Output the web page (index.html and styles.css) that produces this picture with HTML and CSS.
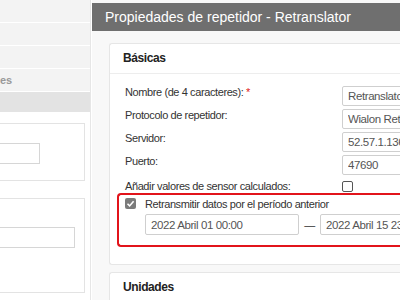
FILE: index.html
```html
<!DOCTYPE html>
<html lang="es">
<head>
    <meta charset="UTF-8">
    <title>Propiedades de repetidor</title>
    <link rel="stylesheet" href="styles.css">
</head>
<body>
<div class="page">
    <div class="side">
        <ul class="side-menu">
            <li></li>
            <li></li>
            <li></li>
            <li>es</li>
            <li class="active"></li>
        </ul>
        <div class="side-box first">
            <input type="text" class="side-input short" value="">
        </div>
        <div class="side-box second">
            <input type="text" class="side-input long" value="">
        </div>
    </div>
    <div class="main">
        <div class="title">Propiedades de repetidor - Retranslator</div>
        <div class="content">
            <div class="card">
                <div class="card-head">Básicas</div>
                <div class="card-body">
                    <div class="row">
                        <span class="label">Nombre (de 4 caracteres): <b class="req">*</b></span>
                        <input type="text" class="field" value="Retranslator">
                    </div>
                    <div class="row">
                        <span class="label">Protocolo de repetidor:</span>
                        <input type="text" class="field" value="Wialon Retranslator">
                    </div>
                    <div class="row">
                        <span class="label">Servidor:</span>
                        <input type="text" class="field" value="52.57.1.136">
                    </div>
                    <div class="row">
                        <span class="label">Puerto:</span>
                        <input type="text" class="field" value="47690">
                    </div>
                    <div class="row row-check">
                        <span class="label">Añadir valores de sensor calculados:</span>
                        <span class="check"></span>
                    </div>
                    <div class="highlight">
                        <div class="check-line">
                            <span class="check checked">
                                <svg width="11" height="11" viewBox="0 0 11 11"><path d="M2.5 5.8 L4.6 7.9 L8.6 3.2" fill="none" stroke="#fff" stroke-width="1.6"/></svg>
                            </span>
                            <span>Retransmitir datos por el período anterior</span>
                        </div>
                        <div class="dates">
                            <input type="text" class="date" value="2022 Abril 01 00:00">
                            <span class="dash">—</span>
                            <input type="text" class="date" value="2022 Abril 15 23:59">
                        </div>
                    </div>
                </div>
            </div>
            <div class="card">
                <div class="card-head">Unidades</div>
            </div>
        </div>
    </div>
</div>
</body>
</html>
```

FILE: styles.css
```css
html, body{
    overflow: hidden;
}
body{
    margin: 0;
    font: 11px "Liberation Sans", Arial, sans-serif;
    letter-spacing: -0.4px;
    color: #333;
    background: #fff;
}
.page{
    display: flex;
    width: 400px;
    height: 300px;
    overflow: hidden;
}
.side{
    width: 90px;
    flex: none;
    border-right: 1px solid #e6e6e6;
}
.side-menu{
    margin: 0;
    padding: 0;
}
.side-menu li{
    list-style: none;
    height: 22px;
    margin-bottom: 1px;
    background: #f3f3f3;
    color: #999;
    font: bold 11px "Liberation Sans", Arial, sans-serif;
    letter-spacing: 0;
    line-height: 22px;
}
.side-menu li.active{
    height: 20px;
    background: #e3e3e3;
}
.side-box{
    width: 87px;
    margin-left: -2px;
    border: 1px solid #e3e3e3;
    box-sizing: border-box;
}
.side-box.first{
    height: 58px;
    margin-top: 11px;
    padding-top: 19px;
}
.side-box.second{
    height: 95px;
    margin-top: 17px;
    padding-top: 28px;
}
.side-input{
    display: block;
    height: 21px;
    margin-left: -10px;
    border: 1px solid #d6d6d6;
    box-sizing: border-box;
}
.side-input.short{ width: 51px; }
.side-input.long{ width: 86px; }

.main{
    flex: none;
    width: 420px;
    margin-left: 1px;
    background: #f8f8f8;
}
.title{
    margin-top: 3px;
    height: 28px;
    padding-left: 13px;
    background: #6f6f6f;
    color: #fff;
    font: 14px "Liberation Sans", Arial, sans-serif;
    letter-spacing: 0;
    line-height: 28px;
    white-space: nowrap;
}
.content{
    padding: 12px 0 0 17px;
}
.card{
    margin-bottom: 7px;
    background: #fff;
    border: 1px solid #e6e6e6;
    border-right: none;
    border-radius: 3px 0 0 3px;
}
.card-head{
    height: 29px;
    padding-left: 13px;
    border-bottom: 1px solid #ededed;
    font-weight: bold;
    font-size: 12px;
    line-height: 28px;
    color: #222;
}
.card-body{
    padding: 12px 0 17px 7px;
}
.row{
    display: flex;
    height: 20px;
    margin-bottom: 3px;
    padding-left: 8px;
}
.label{
    width: 217px;
    flex: none;
    white-space: nowrap;
    line-height: 13px;
}
.req{
    color: #e02020;
    font-weight: normal;
}
.field{
    width: 120px;
    height: 20px;
    flex: none;
    padding: 0 5px;
    border: 1px solid #cfcfcf;
    border-radius: 2px;
    box-sizing: border-box;
    font: inherit;
    font-size: 11.5px;
    letter-spacing: inherit;
    color: #555;
}
.row-check{
    align-items: center;
    height: 14px;
    margin-top: 4px;
    margin-bottom: 0;
}
.check{
    display: inline-block;
    width: 11px;
    height: 11px;
    flex: none;
    border: 1px solid #555;
    border-radius: 2px;
    box-sizing: border-box;
    background: #fff;
}
.check.checked{
    border: none;
    background: #7b7b7b;
}
.check svg{
    display: block;
}
.highlight{
    padding: 2px 0 10px 6px;
    border: 2px solid #e2141b;
    border-right: none;
    border-radius: 4px 0 0 4px;
}
.check-line{
    display: flex;
    align-items: center;
    gap: 9px;
    height: 13px;
}
.dates{
    display: flex;
    align-items: center;
    margin-top: 4px;
    padding-left: 20px;
}
.date{
    width: 154px;
    height: 21px;
    flex: none;
    padding: 0 5px;
    border: 1px solid #cfcfcf;
    border-radius: 2px;
    box-sizing: border-box;
    font: inherit;
    font-size: 11.5px;
    letter-spacing: inherit;
    color: #555;
}
.dash{
    width: 21px;
    flex: none;
    text-align: center;
    color: #333;
}
```
